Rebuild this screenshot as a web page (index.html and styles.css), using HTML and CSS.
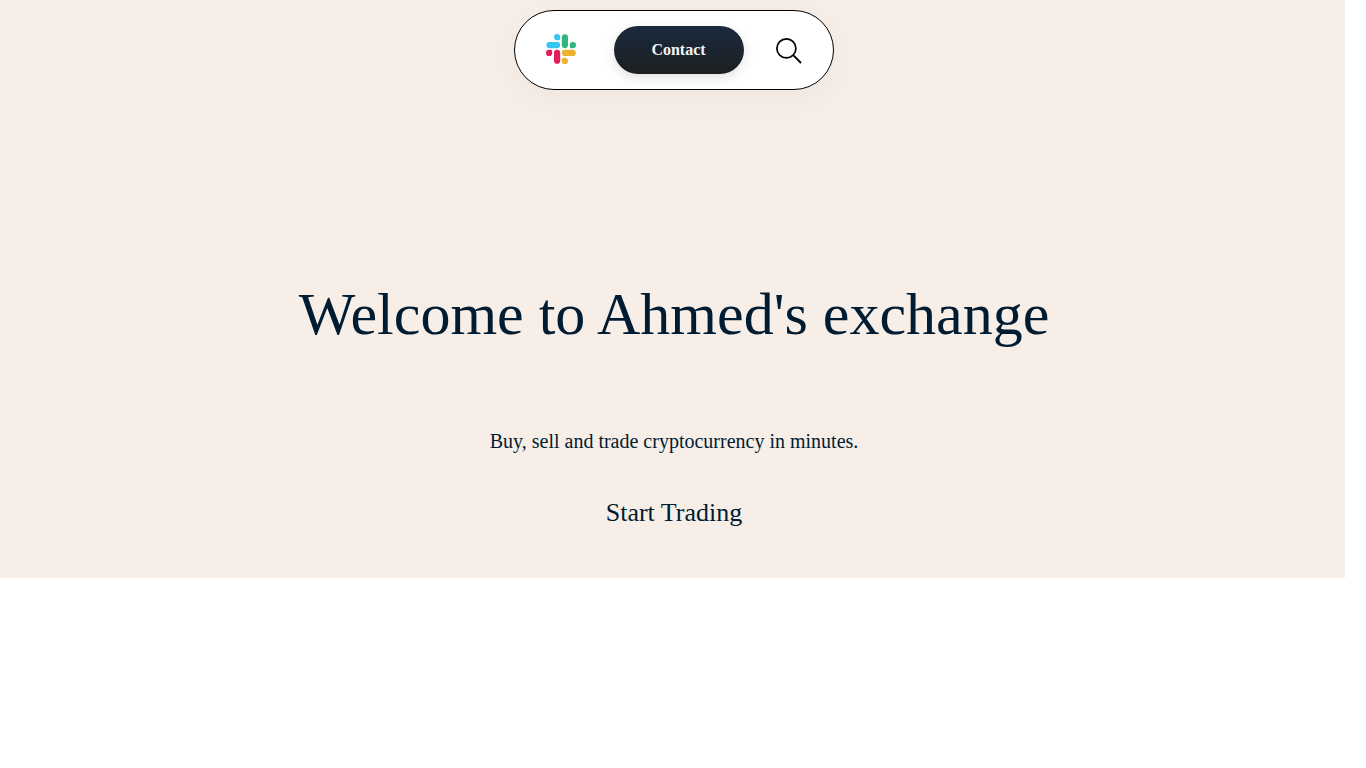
FILE: index.html
```html
<!DOCTYPE html>
<html lang="en">
<head>
<meta charset="utf-8">
<title>Ahmed's exchange</title>
<meta name="viewport" content="width=device-width, initial-scale=1">
<link rel="stylesheet" href="styles.css">
</head>
<body>
<main class="hero">
  <nav class="navbar" aria-label="Main">
    <a class="logo" href="#" aria-label="Home">
      <svg viewBox="0 0 30 30" width="30" height="30" aria-hidden="true">
        <g fill="#36c5f0"><path d="M14.2 4.6A1.6 1.6 0 0 1 12.6 6.2H11.1a3.1 3.1 0 1 1 3.1-3.1z"/><rect x="0.4" y="8" width="13.8" height="6.2" rx="3.1"/></g>
        <g fill="#2eb67d"><path d="M25.4 14.2A1.6 1.6 0 0 1 23.8 12.6v-1.5a3.1 3.1 0 1 1 3.1 3.1z"/><rect x="15.8" y="0.2" width="6.2" height="14" rx="3.1"/></g>
        <g fill="#ecb22e"><path d="M15.8 25.4A1.6 1.6 0 0 1 17.4 23.8h1.5a3.1 3.1 0 1 1-3.1 3.1z"/><rect x="15.8" y="15.8" width="14" height="6.2" rx="3.1"/></g>
        <g fill="#e01e5a"><path d="M4.6 15.8A1.6 1.6 0 0 1 6.2 17.4v1.5a3.1 3.1 0 1 1-3.1-3.1z"/><rect x="8" y="15.8" width="6.2" height="14" rx="3.1"/></g>
      </svg>
    </a>
    <button class="contact" type="button">Contact</button>
    <button class="search" type="button" aria-label="Search">
      <svg viewBox="0 0 26 26" width="26" height="26" fill="none" stroke="#000" aria-hidden="true">
        <circle cx="10.4" cy="10.4" r="9.5" stroke-width="1.7"/>
        <path d="M17.2 17.2L25 25" stroke-width="1.8"/>
      </svg>
    </button>
  </nav>
  <h1 class="title">Welcome to Ahmed's exchange</h1>
  <p class="tagline">Buy, sell and trade cryptocurrency in minutes.</p>
  <a class="start" href="#">Start Trading</a>
</main>
</body>
</html>
```
FILE: styles.css
```css
* {
  box-sizing: border-box;
}

body {
  margin: 0;
  background: #fff;
  color: #001c33;
  font-family: "Liberation Serif", "Times New Roman", serif;
}

.hero {
  display: flex;
  flex-direction: column;
  align-items: center;
  margin-right: 21px;
  padding: 10px 0 49px 3px;
  background: #f6eee7;
}

.navbar {
  display: flex;
  align-items: center;
  justify-content: space-between;
  width: 320px;
  height: 80px;
  padding: 0 31px;
  border: 1px solid #000;
  border-radius: 40px;
  background: #fff;
  box-shadow: 0 8px 40px rgba(0, 0, 0, 0.04);
}

.logo {
  display: flex;
  padding-bottom: 2px;
}

.contact {
  width: 130px;
  height: 48px;
  margin-left: 5px;
  padding: 0;
  border: 0;
  border-radius: 24px;
  background: linear-gradient(#1a2a3d, #1c1f21);
  box-shadow: 0 4px 12px rgba(0, 0, 0, 0.12);
  color: #f4f4f4;
  font-family: inherit;
  font-size: 16px;
  font-weight: bold;
}

.search {
  display: flex;
  padding: 2px 0 0;
  border: 0;
  background: none;
}

.title {
  margin: 189px 0 80px;
  font-size: 60px;
  font-weight: normal;
  line-height: 70px;
  text-align: center;
}

.tagline {
  margin: 0;
  font-size: 20px;
  line-height: 24px;
}

.start {
  margin-top: 44px;
  color: inherit;
  font-size: 26px;
  line-height: 32px;
  text-decoration: none;
}
```
